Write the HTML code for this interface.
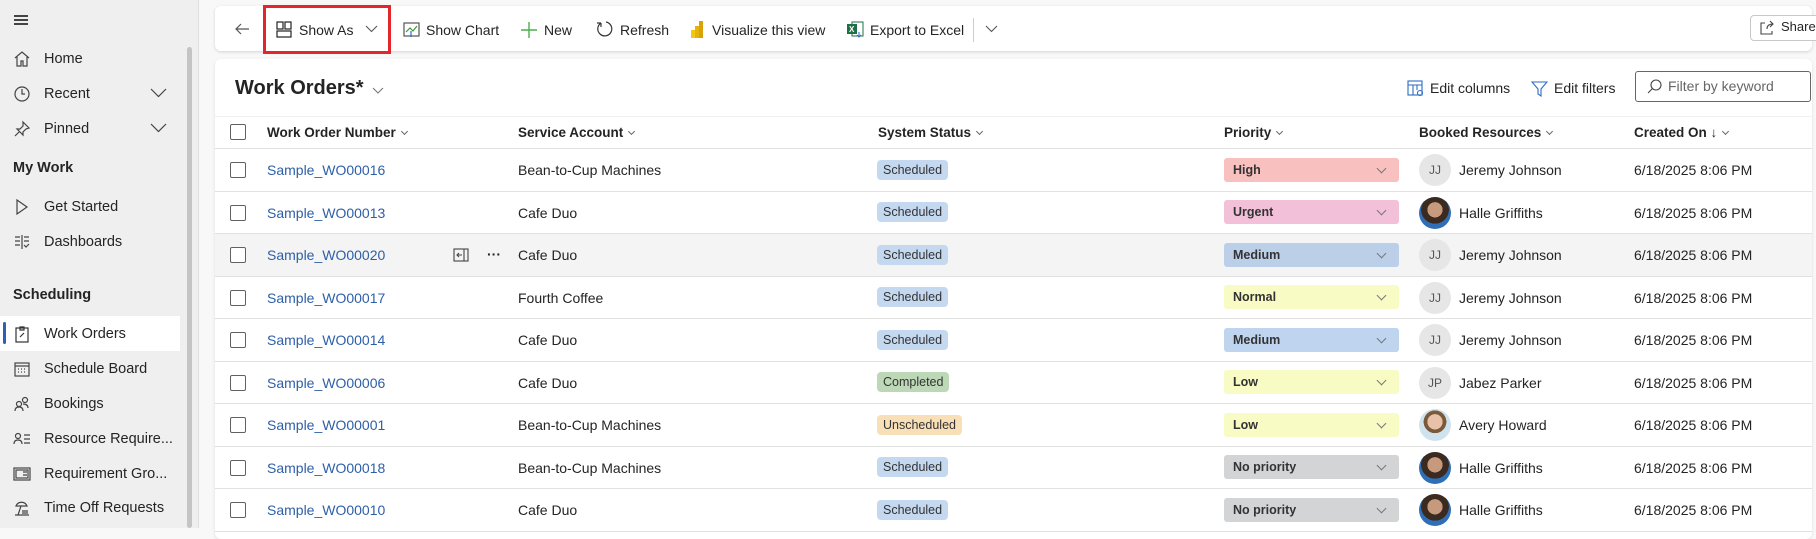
<!DOCTYPE html>
<html><head><meta charset="utf-8"><style>
*{box-sizing:border-box;margin:0;padding:0}
body{width:1816px;height:528px;overflow:hidden;background:#f8f8f8;font-family:"Liberation Sans",sans-serif;color:#242424;font-size:14px;position:relative}
.abs{position:absolute}
#side{left:0;top:0;width:199px;height:528px;background:#efefef;border-right:1px solid #e0e0e0}
.nav{position:absolute;left:44px;font-size:14.5px;color:#242424;line-height:18px}
.ni{position:absolute;left:13px;width:18px;height:18px}
.sec{position:absolute;left:13px;font-weight:bold;font-size:14.5px}
.tb{position:absolute;top:6px;height:45px;left:215px;right:4px;background:#fff;border-radius:6px;box-shadow:0 1px 3px rgba(0,0,0,.15)}
.tbt{position:absolute;top:21px;font-size:14px;line-height:18px;color:#242424}
#grid{left:215px;top:59px;right:4px;height:480px;background:#fff;border-radius:6px;box-shadow:0 1px 3px rgba(0,0,0,.1)}
.row{position:absolute;left:215px;right:4px;height:42.5px;border-bottom:1px solid #e1e1e1}
.cb{position:absolute;left:230px;width:16px;height:16px;border:1px solid #616161;border-radius:2px;background:#fff}
.cell{position:absolute;line-height:18px;font-size:14px}
.lnk{color:#2d5fa8}
.hd{font-weight:bold;color:#242424;font-size:13.5px}
.st{position:absolute;left:877px;height:20px;line-height:20px;font-size:12.5px;padding:0 6px;border-radius:4px;color:#333}
.pr{position:absolute;left:1224px;width:175px;height:24px;line-height:24px;border-radius:3px;font-size:12.5px;font-weight:bold;padding-left:9px;color:#333}
.pr:after{content:"";position:absolute;right:14px;top:7px;width:6px;height:6px;border-right:1px solid #777;border-bottom:1px solid #777;transform:rotate(45deg)}
.av{position:absolute;left:1419px;width:32px;height:32px;border-radius:50%;background:#e6e6e6;font-size:12px;color:#555;text-align:center;line-height:32px}
.ph{background:radial-gradient(circle at 50% 40%,#c89a7d 0 30%,#3a2a20 31% 55%,#2f6fb8 56%)}
.ph2{background:radial-gradient(circle at 50% 40%,#e8c2a8 0 30%,#7a5a3a 31% 45%,#cfe3ee 46%)}
.chev{display:inline-block;width:5px;height:5px;border-right:1px solid #666;border-bottom:1px solid #666;transform:rotate(45deg);margin-left:6px;position:relative;top:-3px}
</style></head><body>
<div id="side" class="abs">
 <div class="abs" style="left:14px;top:15px;width:14px;height:1.5px;background:#444;box-shadow:0 4px 0 #444,0 8px 0 #444"></div>
 <div class="abs" style="left:187px;top:47px;width:5px;height:481px;background:#c4c4c4;border-radius:3px"></div>
 <svg class="ni" style="top:50px" viewBox="0 0 18 18" fill="none" stroke="#444" stroke-width="1.2"><path d="M2 8L9 2l7 6M4 7v9h4v-5h2v5h4V7"/></svg><div class="nav" style="top:50px">Home</div>
 <svg class="ni" style="top:85px" viewBox="0 0 18 18" fill="none" stroke="#444" stroke-width="1.2"><circle cx="9" cy="9" r="7"/><path d="M9 4v5h3"/></svg><div class="nav" style="top:85px">Recent</div>
 <svg class="abs" style="left:150px;top:88px" width="17" height="10"><path d="M1 1l7.5 7.5L16 1" fill="none" stroke="#444" stroke-width="1.2"/></svg>
 <svg class="ni" style="top:120px" viewBox="0 0 18 18" fill="none" stroke="#444" stroke-width="1.2"><path d="M10 2l6 6-3 1-3 3 0 3-6-6 3 0 3-3zM6 12l-4 4"/></svg><div class="nav" style="top:120px">Pinned</div>
 <svg class="abs" style="left:150px;top:123px" width="17" height="10"><path d="M1 1l7.5 7.5L16 1" fill="none" stroke="#444" stroke-width="1.2"/></svg>
 <div class="sec" style="top:160px">My Work</div>
 <svg class="ni" style="top:198px" viewBox="0 0 18 18" fill="none" stroke="#444" stroke-width="1.2"><path d="M4 2l10 7-10 7z"/></svg><div class="nav" style="top:198px">Get Started</div>
 <svg class="ni" style="top:233px" viewBox="0 0 18 18" fill="none" stroke="#444" stroke-width="1.2"><path d="M2 4h5M2 8h5M2 12h5M9 2v14M11 4h5M11 8h5M11 12l2 2 3-3"/></svg><div class="nav" style="top:233px">Dashboards</div>
 <div class="sec" style="top:287px">Scheduling</div>
 <div class="abs" style="left:0;top:316px;width:180px;height:35px;background:#fff"></div>
 <div class="abs" style="left:3px;top:322px;width:3px;height:22px;background:#2f5fb3;border-radius:2px"></div>
 <svg class="ni" style="top:325px" viewBox="0 0 18 18" fill="none" stroke="#333" stroke-width="1.2"><rect x="3" y="3" width="12" height="14"/><path d="M7 2h4v3H7zM7 12l4-4"/></svg><div class="nav" style="top:325px">Work Orders</div>
 <svg class="ni" style="top:360px" viewBox="0 0 18 18" fill="none" stroke="#444" stroke-width="1.2"><rect x="2" y="3" width="14" height="13"/><path d="M2 6h14M5 9h1M8 9h1M11 9h1M5 12h1M8 12h1M11 12h1"/></svg><div class="nav" style="top:360px">Schedule Board</div>
 <svg class="ni" style="top:395px" viewBox="0 0 18 18" fill="none" stroke="#444" stroke-width="1.2"><circle cx="6" cy="9" r="2.5"/><circle cx="12" cy="5" r="2.5"/><path d="M2 16c0-3 2-4 4-4s4 1 4 4M10 9c3 0 5 1 5 4"/></svg><div class="nav" style="top:395px">Bookings</div>
 <svg class="ni" style="top:430px" viewBox="0 0 18 18" fill="none" stroke="#444" stroke-width="1.2"><circle cx="5" cy="6" r="2.5"/><path d="M1 14c0-3 2-4 4-4s4 1 4 4M11 5h6M11 9h6M11 13h6"/></svg><div class="nav" style="top:430px">Resource Require...</div>
 <svg class="ni" style="top:465px" viewBox="0 0 18 18" fill="none" stroke="#444" stroke-width="1.2"><rect x="1" y="3" width="16" height="12"/><rect x="3" y="5" width="12" height="8"/><path d="M10 7h4M10 10h4"/></svg><div class="nav" style="top:465px">Requirement Gro...</div>
 <svg class="ni" style="top:499px" viewBox="0 0 18 18" fill="none" stroke="#444" stroke-width="1.2"><path d="M3 7c2-5 9-5 11 0zM8 7l-3 9M2 16h14M9 12h6M9 14h6"/></svg><div class="nav" style="top:499px">Time Off Requests</div>
</div>

<div class="tb"></div>
<svg class="abs" style="left:233px;top:20px" width="18" height="18" fill="none" stroke="#555" stroke-width="1.2"><path d="M16 9H3M8 4L3 9l5 5"/></svg>
<div class="abs" style="left:263px;top:5px;width:128px;height:49px;border:3px solid #e3262b"></div>
<svg class="abs" style="left:276px;top:21px" width="17" height="17" fill="none" stroke="#222" stroke-width="1.2"><rect x="1" y="1" width="6" height="7"/><rect x="9" y="1" width="6" height="7"/><rect x="1" y="10" width="14" height="6"/></svg>
<div class="tbt" style="left:299px">Show As</div>
<svg class="abs" style="left:365px;top:25px" width="13" height="8"><path d="M1 1l5.5 5.5L12 1" fill="none" stroke="#555" stroke-width="1.1"/></svg>
<svg class="abs" style="left:403px;top:21px" width="18" height="18" fill="none" stroke-width="1.2"><rect x="1" y="2" width="15" height="13" stroke="#555"/><path d="M3 11l4-4 3 3 4-5" stroke="#3a9a3a"/><path d="M8 16V10" stroke="#2b6cc4"/></svg>
<div class="tbt" style="left:426px">Show Chart</div>
<svg class="abs" style="left:520px;top:21px" width="18" height="18"><path d="M9 1v16M1 9h16" stroke="#4caf50" stroke-width="1.4"/></svg>
<div class="tbt" style="left:544px">New</div>
<svg class="abs" style="left:596px;top:20px" width="18" height="18" fill="none" stroke="#333" stroke-width="1.2"><path d="M5 3A7 7 0 1 0 10 2M5 3V7M5 3H1"/></svg>
<div class="tbt" style="left:620px">Refresh</div>
<svg class="abs" style="left:690px;top:20px" width="14" height="18"><rect x="1" y="10" width="4" height="8" fill="#f2c811"/><rect x="5" y="6" width="4" height="12" fill="#e8b20c"/><rect x="9" y="1" width="4" height="17" fill="#d9a10a"/></svg>
<div class="tbt" style="left:712px">Visualize this view</div>
<svg class="abs" style="left:846px;top:20px" width="18" height="18"><rect x="6" y="2" width="11" height="14" fill="none" stroke="#1e7145"/><rect x="1" y="4" width="10" height="10" fill="#1e7145"/><text x="3" y="12" font-size="8" fill="#fff" font-family="Liberation Sans" font-weight="bold">X</text><path d="M13 12v5M11 15l2 2 2-2" stroke="#2b6cc4" fill="none"/></svg>
<div class="tbt" style="left:870px">Export to Excel</div>
<div class="abs" style="left:973px;top:18px;width:1px;height:24px;background:#ccc"></div>
<svg class="abs" style="left:985px;top:25px" width="13" height="8"><path d="M1 1l5.5 5.5L12 1" fill="none" stroke="#555" stroke-width="1.1"/></svg>
<div class="abs" style="left:1750px;top:15px;width:70px;height:26px;border:1px solid #c8c8c8;border-radius:4px;background:#fff"></div>
<svg class="abs" style="left:1759px;top:20px" width="16" height="16" fill="none" stroke="#444" stroke-width="1.1"><path d="M6 3H2v11h11v-3M8 9c0-4 3-5 6-5M11 1l3 3-3 3"/></svg>
<div class="abs" style="left:1781px;top:19px;font-size:13px">Share</div>

<div id="grid" class="abs"></div>
<div class="abs" style="left:235px;top:77px;font-size:20px;font-weight:bold;color:#242424">Work Orders*</div>
<svg class="abs" style="left:372px;top:87px" width="12" height="7"><path d="M1 1l5 5 5-5" fill="none" stroke="#777" stroke-width="1.1"/></svg>
<svg class="abs" style="left:1407px;top:80px" width="17" height="17" fill="none" stroke="#2b6cc4" stroke-width="1.1"><rect x="1" y="1" width="14" height="14"/><path d="M1 5h14M6 5v10M10 5v5"/><circle cx="13" cy="13" r="2.5"/></svg>
<div class="abs" style="left:1430px;top:80px;font-size:14px">Edit columns</div>
<svg class="abs" style="left:1531px;top:80px" width="17" height="17" fill="none" stroke="#2b6cc4" stroke-width="1.1"><path d="M1 2h15l-6 7v7l-3-2V9z"/></svg>
<div class="abs" style="left:1554px;top:80px;font-size:14px">Edit filters</div>
<div class="abs" style="left:1635px;top:71px;width:176px;height:31px;border:1px solid #666;border-radius:3px;background:#fff"></div>
<svg class="abs" style="left:1647px;top:79px" width="15" height="15" fill="none" stroke="#444" stroke-width="1.1"><circle cx="9" cy="6" r="5"/><path d="M5.5 9.5L1 14"/></svg>
<div class="abs" style="left:1668px;top:78px;font-size:14px;color:#666">Filter by keyword</div>

<div class="abs" style="left:215px;top:116px;right:4px;height:1px;background:#f0f0f0"></div>
<div class="row" style="top:106px;height:43px"></div>
<div class="cb" style="top:124px"></div>
<div class="cell hd" style="left:267px;top:124px">Work Order Number<span class="chev"></span></div>
<div class="cell hd" style="left:518px;top:124px">Service Account<span class="chev"></span></div>
<div class="cell hd" style="left:878px;top:124px">System Status<span class="chev"></span></div>
<div class="cell hd" style="left:1224px;top:124px">Priority<span class="chev"></span></div>
<div class="cell hd" style="left:1419px;top:124px">Booked Resources<span class="chev"></span></div>
<div class="cell hd" style="left:1634px;top:124px">Created On ↓<span class="chev"></span></div>

<div class="row" style="top:149px"></div>
<div class="cb" style="top:162px"></div><div class="cell lnk" style="left:267px;top:161px">Sample_WO00016</div><div class="cell" style="left:518px;top:161px">Bean-to-Cup Machines</div>
<div class="st" style="top:160px;background:#c4d8f0">Scheduled</div><div class="pr" style="top:158px;background:#f9c0c0">High</div>
<div class="av" style="top:154px">JJ</div><div class="cell" style="left:1459px;top:161px">Jeremy Johnson</div><div class="cell" style="left:1634px;top:161px">6/18/2025 8:06 PM</div>

<div class="row" style="top:191.5px"></div>
<div class="cb" style="top:205px"></div><div class="cell lnk" style="left:267px;top:204px">Sample_WO00013</div><div class="cell" style="left:518px;top:204px">Cafe Duo</div>
<div class="st" style="top:202px;background:#c4d8f0">Scheduled</div><div class="pr" style="top:200px;background:#f3c0d9">Urgent</div>
<div class="av ph" style="top:197px"></div><div class="cell" style="left:1459px;top:204px">Halle Griffiths</div><div class="cell" style="left:1634px;top:204px">6/18/2025 8:06 PM</div>

<div class="row" style="top:234px;background:#f4f4f4"></div>
<div class="cb" style="top:247px"></div><div class="cell lnk" style="left:267px;top:246px">Sample_WO00020</div><div class="cell" style="left:518px;top:246px">Cafe Duo</div>
<svg class="abs" style="left:453px;top:248px" width="16" height="14" fill="none" stroke="#444" stroke-width="1.1"><rect x="1" y="1" width="14" height="12"/><path d="M11 1v12M9 7H4M6 5L4 7l2 2"/></svg>
<div class="abs" style="left:487px;top:246px;font-size:14px;font-weight:bold">···</div>
<div class="st" style="top:245px;background:#c4d8f0">Scheduled</div><div class="pr" style="top:243px;background:#bccfe9">Medium</div>
<div class="av" style="top:239px">JJ</div><div class="cell" style="left:1459px;top:246px">Jeremy Johnson</div><div class="cell" style="left:1634px;top:246px">6/18/2025 8:06 PM</div>

<div class="row" style="top:276.5px"></div>
<div class="cb" style="top:290px"></div><div class="cell lnk" style="left:267px;top:289px">Sample_WO00017</div><div class="cell" style="left:518px;top:289px">Fourth Coffee</div>
<div class="st" style="top:287px;background:#c4d8f0">Scheduled</div><div class="pr" style="top:285px;background:#f9fbc4">Normal</div>
<div class="av" style="top:282px">JJ</div><div class="cell" style="left:1459px;top:289px">Jeremy Johnson</div><div class="cell" style="left:1634px;top:289px">6/18/2025 8:06 PM</div>

<div class="row" style="top:319px"></div>
<div class="cb" style="top:332px"></div><div class="cell lnk" style="left:267px;top:331px">Sample_WO00014</div><div class="cell" style="left:518px;top:331px">Cafe Duo</div>
<div class="st" style="top:330px;background:#c4d8f0">Scheduled</div><div class="pr" style="top:328px;background:#bfd4ee">Medium</div>
<div class="av" style="top:324px">JJ</div><div class="cell" style="left:1459px;top:331px">Jeremy Johnson</div><div class="cell" style="left:1634px;top:331px">6/18/2025 8:06 PM</div>

<div class="row" style="top:361.5px"></div>
<div class="cb" style="top:375px"></div><div class="cell lnk" style="left:267px;top:374px">Sample_WO00006</div><div class="cell" style="left:518px;top:374px">Cafe Duo</div>
<div class="st" style="top:372px;background:#bcd8b6">Completed</div><div class="pr" style="top:370px;background:#f9fbc4">Low</div>
<div class="av" style="top:367px">JP</div><div class="cell" style="left:1459px;top:374px">Jabez Parker</div><div class="cell" style="left:1634px;top:374px">6/18/2025 8:06 PM</div>

<div class="row" style="top:404px"></div>
<div class="cb" style="top:417px"></div><div class="cell lnk" style="left:267px;top:416px">Sample_WO00001</div><div class="cell" style="left:518px;top:416px">Bean-to-Cup Machines</div>
<div class="st" style="top:415px;background:#f8dfb8">Unscheduled</div><div class="pr" style="top:413px;background:#f9fbc4">Low</div>
<div class="av ph2" style="top:409px"></div><div class="cell" style="left:1459px;top:416px">Avery Howard</div><div class="cell" style="left:1634px;top:416px">6/18/2025 8:06 PM</div>

<div class="row" style="top:446.5px"></div>
<div class="cb" style="top:460px"></div><div class="cell lnk" style="left:267px;top:459px">Sample_WO00018</div><div class="cell" style="left:518px;top:459px">Bean-to-Cup Machines</div>
<div class="st" style="top:457px;background:#c4d8f0">Scheduled</div><div class="pr" style="top:455px;background:#d2d4d6">No priority</div>
<div class="av ph" style="top:452px"></div><div class="cell" style="left:1459px;top:459px">Halle Griffiths</div><div class="cell" style="left:1634px;top:459px">6/18/2025 8:06 PM</div>

<div class="row" style="top:489px"></div>
<div class="cb" style="top:502px"></div><div class="cell lnk" style="left:267px;top:501px">Sample_WO00010</div><div class="cell" style="left:518px;top:501px">Cafe Duo</div>
<div class="st" style="top:500px;background:#c4d8f0">Scheduled</div><div class="pr" style="top:498px;background:#d2d4d6">No priority</div>
<div class="av ph" style="top:494px"></div><div class="cell" style="left:1459px;top:501px">Halle Griffiths</div><div class="cell" style="left:1634px;top:501px">6/18/2025 8:06 PM</div>
</body></html>
